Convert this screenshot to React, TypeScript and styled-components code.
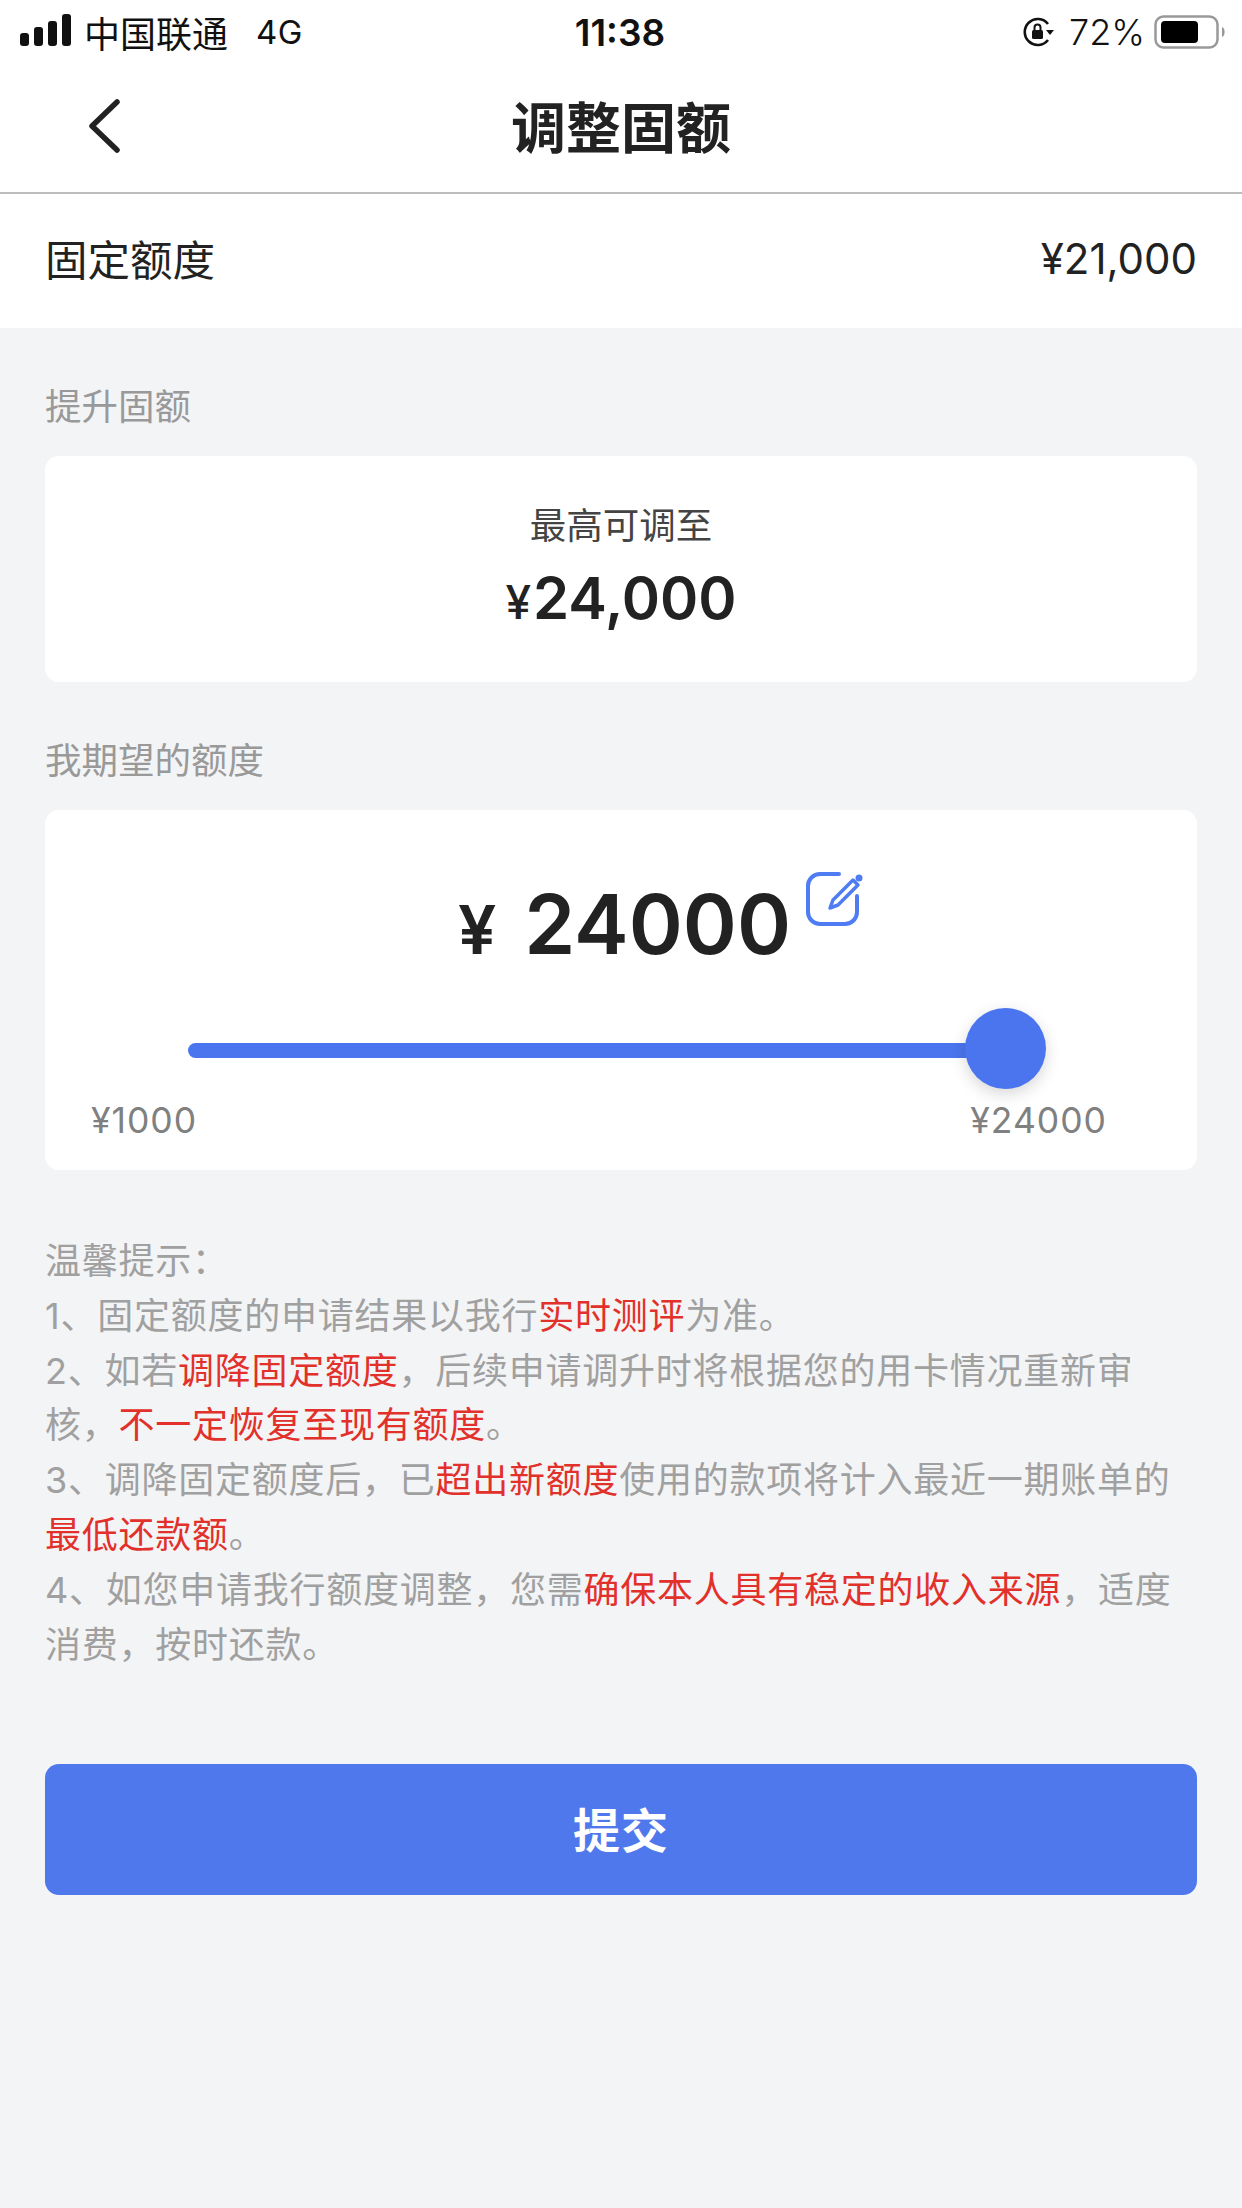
import React from "react";
import styled, { createGlobalStyle } from "styled-components";

const Global = createGlobalStyle`
  html, body { margin: 0; padding: 0; background: #f3f4f6; }
  body { font-family: Inter, "Noto Sans CJK SC", sans-serif; }
`;
const Page = styled.div`
  width: 1242px; height: 2208px; background: #f3f4f6; overflow: hidden; display: flex; flex-direction: column;
  color: #222;
`;
const StatusBar = styled.div`
  height: 64px; background: #fff; display: grid; grid-template-columns: 1fr auto 1fr; align-items: center; padding: 0 16px 0 20px; color: #111;
`;
const StatusLeft = styled.div`display: flex; align-items: center; font-size: 36px; font-weight: 400;`;
const Signal = styled.svg`margin: -4px 12px 0 0;`;
const Network = styled.span`margin-left: 28px; font-size: 33px; letter-spacing: .5px;`;
const Time = styled.div`font-size: 37px; font-weight: 600; margin-left: -6px;`;
const StatusRight = styled.div`display: flex; align-items: center; justify-content: flex-end; font-size: 36px; font-weight: 300;`;
const RotationLock = styled.svg`margin-right: 14px; margin-left: 4px;`;
const Battery = styled.svg`margin-left: 9px;`;
const Nav = styled.div`
  height: 128px; background: #fff; border-bottom: 2px solid #bdbdbd; display: flex; align-items: center; justify-content: center; position: relative;
`;
const Back = styled.svg`position: absolute; left: 88px; top: 34px;`;
const Title = styled.h1`margin: 0 0 8px; font-size: 55px; font-weight: 700; color: #222;`;
const QuotaRow = styled.div`
  height: 134px; background: #fff; display: flex; align-items: center; justify-content: space-between; padding: 0 45px 7px; box-sizing: border-box; font-size: 42.500px; color: #222;
`;
const Value = styled.span`font-size: 42px; position: relative; top: 1px;`;
const Content = styled.div`padding: 0 45px; display: flex; flex-direction: column;`;
const SectionLabel = styled.div`height: 50px; line-height: 50px; font-size: 36.500px; color: #999; margin-top: ${p => p.$top}px;`;
const Card = styled.div`background: #fff; border-radius: 14px; margin-top: ${p => p.$top}px;`;
const MaxCard = styled(Card)`height: 226px; display: flex; flex-direction: column; align-items: center; padding-top: 45px; box-sizing: border-box;`;
const MaxLabel = styled.div`font-size: 36.500px; line-height: 50px; color: #444;`;
const MaxAmount = styled.div`font-size: 58px; font-weight: 600; line-height: 76px; margin-top: 9px; color: #222;`;
const SmallYen = styled.span`font-size: 46px; font-weight: 500; margin-right: 2px;`;
const SliderCard = styled(Card)`height: 360px; box-sizing: border-box; padding-top: 65px; display: flex; flex-direction: column;`;
const AmountRow = styled.div`display: flex; justify-content: center; align-items: flex-start; height: 120px; padding-left: 80px;`;
const BigAmount = styled.div`font-size: 82px; font-weight: 600; line-height: 100px; color: #222;`;
const Yen = styled.span`font-size: 68px; margin-right: 28px;`;
const Edit = styled.svg`margin: -3px 0 0 15px;`;
const Track = styled.div`
  position: relative; height: 15px; border-radius: 8px; background: #4a75ee; margin: 48px 191px 0 143px;
`;
const Thumb = styled.div`
  position: absolute; right: -40px; top: -35px; width: 81px; height: 81px; border-radius: 50%; background: #4a75ee; box-shadow: 0 5px 16px rgba(0,0,0,.16);
`;
const Ends = styled.div`
  display: flex; justify-content: space-between; padding: 0 90px 0 46px; margin-top: 41px; font-size: 35.500px; line-height: 44px; color: #808080; letter-spacing: 1px;
`;
const Tips = styled.div`margin-top: 64px; font-size: 36px; line-height: 54.800px; color: #a0a0a0; letter-spacing: .75px;`;
const TipLine = styled.div`white-space: nowrap;`;
const Red = styled.span`color: #e2302a;`;
const Submit = styled.button`
  margin-top: 92px; height: 131px; padding: 0 0 5px; border: 0; border-radius: 14px; background: #4f78ed; color: #fff; font-family: inherit; font-size: 47px; font-weight: 700; letter-spacing: 1px;
`;

export default function App() {
  return (
    <Page>
      <Global />
      <StatusBar>
        <StatusLeft>
          <Signal width="52" height="32" viewBox="0 0 52 32">
            <rect x="0" y="19" width="9" height="13" rx="3" fill="#111" />
            <rect x="14" y="13" width="9" height="19" rx="3" fill="#111" />
            <rect x="28" y="7" width="9" height="25" rx="3" fill="#111" />
            <rect x="42" y="0" width="9" height="32" rx="3" fill="#111" />
          </Signal>
          <span>中国联通</span>
          <Network>4G</Network>
        </StatusLeft>
        <Time>11:38</Time>
        <StatusRight>
          <RotationLock width="32" height="30" viewBox="0 0 32 30" fill="none">
            <path d="M25 23A13 13 0 1 1 25 7" stroke="#111" strokeWidth="2.600" />
            <path d="M23 13h8l-4 5z" fill="#111" />
            <rect x="9" y="13" width="11" height="9" rx="1.500" fill="#111" />
            <path d="M11.500 13v-2.500a3 3 0 0 1 6 0V13" stroke="#111" strokeWidth="2" />
          </RotationLock>
          <span>72%</span>
          <Battery width="72" height="36" viewBox="0 0 72 36" fill="none">
            <rect x="1.500" y="2.500" width="62" height="31" rx="8" stroke="#999" strokeWidth="2.500" />
            <rect x="7" y="7" width="37" height="22" rx="4" fill="#000" />
            <path d="M68 13c3.500 1 3.500 9 0 10z" fill="#999" />
          </Battery>
        </StatusRight>
      </StatusBar>
      <Nav>
        <Back width="34" height="60" viewBox="0 0 34 60" fill="none">
          <path d="M29 4 4 28l25 24" stroke="#222" strokeWidth="5.500" strokeLinecap="round" strokeLinejoin="round" />
        </Back>
        <Title>调整固额</Title>
      </Nav>
      <QuotaRow>
        <span>固定额度</span>
        <Value>¥21,000</Value>
      </QuotaRow>
      <Content>
        <SectionLabel $top={54}>提升固额</SectionLabel>
        <MaxCard $top={24}>
          <MaxLabel>最高可调至</MaxLabel>
          <MaxAmount><SmallYen>¥</SmallYen>24,000</MaxAmount>
        </MaxCard>
        <SectionLabel $top={54}>我期望的额度</SectionLabel>
        <SliderCard $top={24}>
          <AmountRow>
            <BigAmount><Yen>¥</Yen>24000</BigAmount>
            <Edit width="58" height="56" viewBox="0 0 58 56" fill="none">
              <path d="M33 2H14A12 12 0 0 0 2 14v26a12 12 0 0 0 12 12h25a12 12 0 0 0 12-12V24" stroke="#4f7cf2" strokeWidth="4" strokeLinecap="round" />
              <path d="M24 36l3-8L47 8l5 5-20 20z" stroke="#4f7cf2" strokeWidth="3.500" strokeLinejoin="round" />
              <circle cx="53" cy="6" r="3.500" fill="#4f7cf2" />
            </Edit>
          </AmountRow>
          <Track><Thumb /></Track>
          <Ends><span>¥1000</span><span>¥24000</span></Ends>
        </SliderCard>
        <Tips>
          <TipLine>温馨提示：</TipLine>
          <TipLine>1、固定额度的申请结果以我行<Red>实时测评</Red>为准。</TipLine>
          <TipLine>2、如若<Red>调降固定额度</Red>，后续申请调升时将根据您的用卡情况重新审</TipLine>
          <TipLine>核，<Red>不一定恢复至现有额度</Red>。</TipLine>
          <TipLine>3、调降固定额度后，已<Red>超出新额度</Red>使用的款项将计入最近一期账单的</TipLine>
          <TipLine><Red>最低还款额</Red>。</TipLine>
          <TipLine>4、如您申请我行额度调整，您需<Red>确保本人具有稳定的收入来源</Red>，适度</TipLine>
          <TipLine>消费，按时还款。</TipLine>
        </Tips>
        <Submit>提交</Submit>
      </Content>
    </Page>
  );
}
